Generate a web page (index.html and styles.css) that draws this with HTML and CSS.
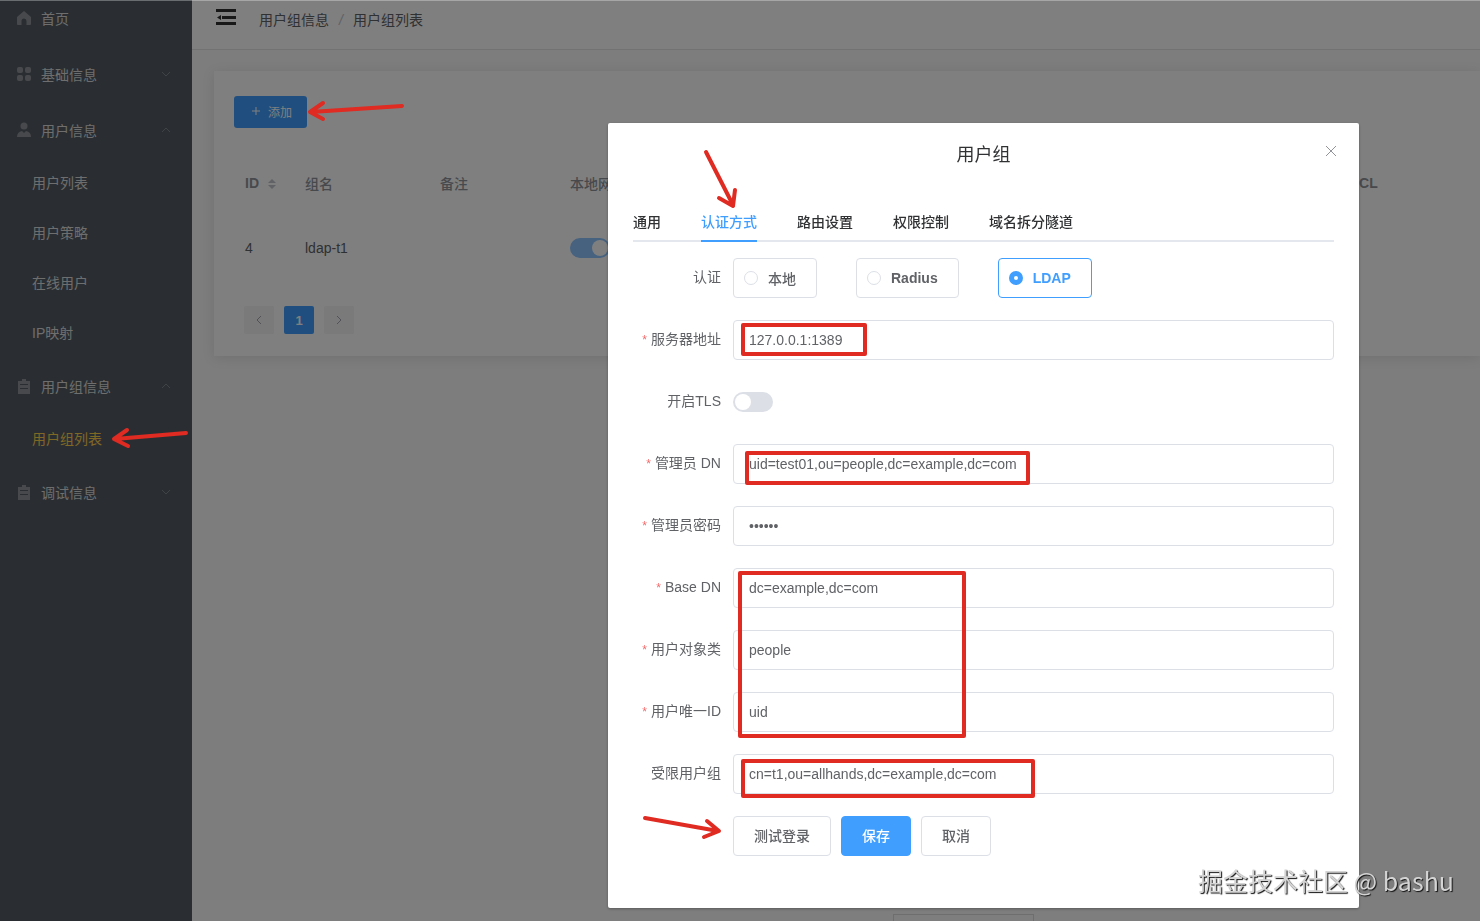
FILE: index.html
```html
<!DOCTYPE html>
<html lang="zh-CN">
<head>
    <meta charset="UTF-8">
    <meta name="viewport" content="width=device-width, initial-scale=1.0">
    <title>用户组列表</title>
    <link rel="stylesheet" href="styles.css">
</head>
<body>
    <div class="layout">
        <nav class="sidebar">
            <ul class="menu">
                <li><a class="menu-item" href="#">
                    <svg class="menu-icon" viewBox="0 0 18 18"><path d="M9 2 2 8v7q0 1 1 1h3.500v-4a2.500 2.500 0 0 1 5 0v4H15q1 0 1-1V8z"/></svg>
                    <span>首页</span></a></li>
                <li><a class="menu-item" href="#">
                    <svg class="menu-icon" viewBox="0 0 18 18"><rect x="2" y="2" width="6" height="6" rx="2"/><rect x="10" y="2" width="6" height="6" rx="2"/><rect x="2" y="10" width="6" height="6" rx="2"/><rect x="10" y="10" width="6" height="6" rx="2"/></svg>
                    <span>基础信息</span>
                    <svg class="chevron" viewBox="0 0 12 12"><path d="M2 4l4 4 4-4"/></svg></a></li>
                <li><a class="menu-item" href="#">
                    <svg class="menu-icon" viewBox="0 0 18 18"><circle cx="9" cy="5" r="3.500"/><path d="M2 16q0-5 5-6l2 2 2-2q5 1 5 6z"/></svg>
                    <span>用户信息</span>
                    <svg class="chevron" viewBox="0 0 12 12"><path d="M2 8l4-4 4 4"/></svg></a>
                    <ul class="submenu">
                        <li><a href="#">用户列表</a></li>
                        <li><a href="#">用户策略</a></li>
                        <li><a href="#">在线用户</a></li>
                        <li><a href="#">IP映射</a></li>
                    </ul></li>
                <li><a class="menu-item" href="#">
                    <svg class="menu-icon" viewBox="0 0 18 18"><path d="M3 4h4V2h4v2h4v13H3zM5 7v1h8V7zm0 4v1h8v-1z" fill-rule="evenodd"/></svg>
                    <span>用户组信息</span>
                    <svg class="chevron" viewBox="0 0 12 12"><path d="M2 8l4-4 4 4"/></svg></a>
                    <ul class="submenu">
                        <li><a class="active" href="#">用户组列表</a></li>
                    </ul></li>
                <li><a class="menu-item" href="#">
                    <svg class="menu-icon" viewBox="0 0 18 18"><path d="M3 4h4V2h4v2h4v13H3zM5 7v1h8V7zm0 4v1h8v-1z" fill-rule="evenodd"/></svg>
                    <span>调试信息</span>
                    <svg class="chevron" viewBox="0 0 12 12"><path d="M2 4l4 4 4-4"/></svg></a></li>
            </ul>
        </nav>

        <div class="page">
            <header class="topbar">
                <button class="collapse-btn" type="button" aria-label="折叠菜单">
                    <svg viewBox="0 0 20 16" width="20" height="16"><path d="M0 0h20v3H0zM6 7h14v3H6zM0 13h20v3H0zM1 8.500 5 6v5z"/></svg>
                </button>
                <div class="breadcrumb">
                    <span>用户组信息</span><i>/</i><span>用户组列表</span>
                </div>
            </header>

            <main class="content">
                <section class="card">
                    <button class="add-btn" type="button">
                        <svg viewBox="0 0 12 12" width="12" height="12"><path d="M6 2v8M2 6h8"/></svg>
                        添加
                    </button>
                    <table class="group-table">
                        <thead>
                            <tr>
                                <th class="col-id"><span class="latin">ID</span>
                                    <svg class="sort" viewBox="0 0 10 12" width="10" height="12"><path d="M5 1 9 5H1zM5 11 1 7h8z"/></svg></th>
                                <th class="col-name">组名</th>
                                <th class="col-note">备注</th>
                                <th>本地网络</th>
                                <th class="col-acl"><span class="latin">ACL</span></th>
                            </tr>
                        </thead>
                        <tbody>
                            <tr>
                                <td>4</td>
                                <td>ldap-t1</td>
                                <td></td>
                                <td><input class="switch" type="checkbox" aria-label="本地网络" checked disabled></td>
                                <td></td>
                            </tr>
                        </tbody>
                    </table>
                    <div class="pagination">
                        <button type="button" aria-label="上一页"><svg viewBox="0 0 12 12" width="12" height="12"><path d="M8 2 4 6l4 4"/></svg></button>
                        <button type="button" class="current">1</button>
                        <button type="button" aria-label="下一页"><svg viewBox="0 0 12 12" width="12" height="12"><path d="M4 2l4 4-4 4"/></svg></button>
                    </div>
                </section>
            </main>
            <footer class="footer"><div class="footer-box"></div></footer>
        </div>
    </div>

    <div class="overlay">
        <div class="dialog" role="dialog" aria-labelledby="dialog_title">
            <div class="dialog-header">
                <h2 id="dialog_title">用户组</h2>
                <button class="close-btn" type="button" aria-label="关闭">
                    <svg viewBox="0 0 16 16" width="16" height="16"><path d="M3 3l10 10M13 3 3 13"/></svg>
                </button>
            </div>
            <div class="dialog-body">
                <div class="tabs" role="tablist">
                    <button type="button" role="tab">通用</button>
                    <button type="button" role="tab" class="active" aria-selected="true">认证方式</button>
                    <button type="button" role="tab">路由设置</button>
                    <button type="button" role="tab">权限控制</button>
                    <button type="button" role="tab">域名拆分隧道</button>
                </div>
                <form class="form">
                    <div class="form-item">
                        <span class="label">认证</span>
                        <div class="radios">
                            <label class="radio"><input type="radio" name="auth">本地</label>
                            <label class="radio latin"><input type="radio" name="auth">Radius</label>
                            <label class="radio latin"><input type="radio" name="auth" checked>LDAP</label>
                        </div>
                    </div>
                    <div class="form-item required">
                        <label class="label" for="addr">服务器地址</label>
                        <input class="text" id="addr" type="text" value="127.0.0.1:1389">
                    </div>
                    <div class="form-item">
                        <label class="label" for="tls">开启TLS</label>
                        <input class="switch" id="tls" type="checkbox">
                    </div>
                    <div class="form-item required">
                        <label class="label" for="bind_dn">管理员 DN</label>
                        <input class="text" id="bind_dn" type="text" value="uid=test01,ou=people,dc=example,dc=com">
                    </div>
                    <div class="form-item required">
                        <label class="label" for="bind_pwd">管理员密码</label>
                        <input class="text" id="bind_pwd" type="password" value="123456">
                    </div>
                    <div class="form-item required">
                        <label class="label" for="base_dn">Base DN</label>
                        <input class="text" id="base_dn" type="text" value="dc=example,dc=com">
                    </div>
                    <div class="form-item required">
                        <label class="label" for="object_class">用户对象类</label>
                        <input class="text" id="object_class" type="text" value="people">
                    </div>
                    <div class="form-item required">
                        <label class="label" for="search_attr">用户唯一ID</label>
                        <input class="text" id="search_attr" type="text" value="uid">
                    </div>
                    <div class="form-item">
                        <label class="label" for="member_of">受限用户组</label>
                        <input class="text" id="member_of" type="text" value="cn=t1,ou=allhands,dc=example,dc=com">
                    </div>
                    <div class="form-item actions">
                        <button class="btn" type="button">测试登录</button>
                        <button class="btn primary" type="button">保存</button>
                        <button class="btn" type="button">取消</button>
                    </div>
                </form>
            </div>
        </div>
    </div>

    <!-- marcas rojas: flechas y recuadros -->
    <svg class="marks" width="1480" height="921" viewBox="0 0 1480 921">
        <path d="M402 106 311 112M323 103 310 112 323 119"/>
        <path d="M186 433 115 439M127 430 114 439 128 446"/>
        <path d="M706 152 733 205M719 198 733 206 735 190"/>
        <path d="M645 818 718 831M707 821 719 831 704 837"/>
        <rect x="743" y="325" width="122" height="29"/>
        <rect x="747" y="453" width="281" height="30"/>
        <rect x="740" y="573" width="224" height="163"/>
        <rect x="743" y="761" width="290" height="35"/>
    </svg>
    <div class="watermark">掘金技术社区 @ bashu</div>
</body>
</html>
```
FILE: styles.css
```css
* {
    box-sizing: border-box;
}

body {
    margin: 0;
    height: 100vh;
    overflow: hidden;
    font-family: "Liberation Sans", "Noto Sans CJK SC", sans-serif;
    font-size: 14px;
    color: #606266;
}

button, input {
    font-family: inherit;
    font-size: 14px;
    margin: 0;
}

button {
    cursor: pointer;
}

svg {
    flex: none;
}

.latin {
    font-weight: 700;
}

.layout {
    display: flex;
    height: 100vh;
}

/* menu lateral */
.sidebar {
    width: 192px;
    flex: none;
    background: #545c64;
    overflow: hidden;
}

.menu, .submenu {
    list-style: none;
    margin: 0;
    padding: 0;
}

.menu {
    margin-top: -10px;
}

.menu a {
    color: #dcdcdc;
    text-decoration: none;
}

.menu-item {
    display: flex;
    align-items: center;
    height: 56px;
    padding: 0 20px 0 15px;
}

.menu-icon {
    width: 18px;
    height: 18px;
    margin-right: 8px;
    fill: #909399;
}

.chevron {
    width: 12px;
    height: 12px;
    margin-left: auto;
    fill: none;
    stroke: #80868c;
}

.submenu a {
    display: block;
    height: 50px;
    line-height: 50px;
    padding-left: 32px;
}

.menu a.active {
    color: #ffd04b;
}

/* pagina */
.page {
    flex: 1;
    min-width: 0;
    display: flex;
    flex-direction: column;
    background: #fafafa;
}

.topbar {
    display: flex;
    align-items: flex-start;
    gap: 23px;
    height: 50px;
    padding: 9px 24px;
    background: #fff;
    border-bottom: 1px solid #e4e4e4;
}

.collapse-btn {
    padding: 0;
    border: 0;
    background: none;
    line-height: 0;
    fill: #303133;
}

.breadcrumb {
    line-height: 22px;
}

.breadcrumb i {
    margin: 0 10px;
    color: #c0c4cc;
}

.content {
    flex: 1;
    padding: 21px 0 0 22px;
}

.card {
    padding: 25px 0 22px 20px;
    background: #fff;
    box-shadow: 0 2px 12px rgba(0, 0, 0, 0.1);
}

.add-btn {
    display: flex;
    align-items: center;
    gap: 6px;
    height: 32px;
    padding: 0 15px 2px 16px;
    border: 0;
    border-radius: 3px;
    background: #409eff;
    color: #fff;
    font-size: 12px;
}

.add-btn svg, .pagination svg {
    fill: none;
    stroke: currentColor;
}

.group-table {
    width: 100%;
    margin-top: 32px;
    table-layout: fixed;
    border-collapse: collapse;
}

.group-table th {
    height: 48px;
    padding: 0 11px 2px;
    color: #909399;
    font-weight: 500;
    text-align: left;
}

.group-table td {
    height: 80px;
    padding: 0 11px;
}

.col-id {
    width: 60px;
}

.col-name {
    width: 135px;
}

.col-note {
    width: 130px;
}

.group-table .col-acl {
    width: 142px;
}

.sort {
    margin-left: 4px;
    fill: #c0c4cc;
    vertical-align: middle;
}

.pagination {
    display: flex;
    gap: 10px;
    padding: 18px 10px 0;
}

.pagination button {
    display: flex;
    align-items: center;
    justify-content: center;
    width: 30px;
    height: 28px;
    padding: 0;
    border: 0;
    border-radius: 2px;
    background: #f4f4f5;
    color: #a0a4ac;
    font-size: 13px;
}

.pagination .current {
    background: #409eff;
    color: #fff;
    font-weight: 700;
}

.footer {
    height: 21px;
    padding: 14px 0 0 701px;
    background: #fdfdfd;
}

.footer-box {
    width: 141px;
    height: 7px;
    border: 1px solid #dcdcdc;
    border-bottom: 0;
}

/* interruptor */
.switch {
    appearance: none;
    display: block;
    width: 40px;
    height: 20px;
    padding: 2px;
    border-radius: 10px;
    background: #dcdfe6;
}

.switch::before {
    content: "";
    display: block;
    width: 16px;
    height: 16px;
    border-radius: 50%;
    background: #fff;
}

.switch:checked {
    background: #409eff;
}

.switch:checked::before {
    margin-left: auto;
}

.switch:disabled {
    opacity: 0.6;
}

/* dialogo */
.overlay {
    position: fixed;
    inset: 0;
    display: flex;
    justify-content: flex-end;
    align-items: flex-start;
    padding: 122px 121px 0 0;
    border-top: 1px solid rgba(255, 255, 255, 0.3);
    background: rgba(0, 0, 0, 0.5);
}

.dialog {
    width: 100%;
    max-width: 751px;
    border-radius: 2px;
    background: #fff;
    box-shadow: 0 1px 3px rgba(0, 0, 0, 0.3);
}

.dialog-header {
    position: relative;
    padding: 20px 20px 10px;
    text-align: center;
}

.dialog-header h2 {
    margin: 0;
    color: #303133;
    font-size: 18px;
    font-weight: 400;
    line-height: 24px;
}

.close-btn {
    position: absolute;
    top: 20px;
    right: 20px;
    padding: 0;
    border: 0;
    background: none;
    line-height: 0;
    fill: none;
    stroke: #909399;
}

.dialog-body {
    padding: 25px 25px 30px;
}

.tabs {
    display: flex;
    gap: 40px;
    margin-bottom: 16px;
    box-shadow: inset 0 -2px #e4e7ed;
}

.tabs button {
    height: 40px;
    padding: 0;
    border: 0;
    border-bottom: 2px solid transparent;
    background: none;
    color: #303133;
    font-weight: 500;
}

.tabs .active {
    border-color: #409eff;
    color: #409eff;
}

.form-item {
    display: flex;
    align-items: center;
    height: 40px;
    margin-bottom: 22px;
}

.label {
    flex: none;
    width: 100px;
    padding: 0 12px 2px 0;
    line-height: 38px;
    text-align: right;
}

.required .label::before {
    content: "*";
    margin-right: 4px;
    color: #f56c6c;
    font-size: 12px;
}

.text {
    flex: 1;
    min-width: 0;
    height: 40px;
    padding: 0 15px 1px;
    border: 1px solid #dcdfe6;
    border-radius: 4px;
    background: #fff;
    color: #606266;
}

.radios {
    display: flex;
    gap: 39px;
}

.radio {
    display: flex;
    align-items: center;
    gap: 10px;
    height: 40px;
    padding: 0 20px 0 10px;
    border: 1px solid #dcdfe6;
    border-radius: 4px;
    font-weight: 500;
}

.radio.latin {
    font-weight: 700;
}

.radio input {
    appearance: none;
    width: 14px;
    height: 14px;
    border: 1px solid #dcdfe6;
    border-radius: 50%;
}

.radio input:checked {
    border: 5px solid #409eff;
}

.radio:has(input:checked) {
    border-color: #409eff;
    color: #409eff;
}

.actions {
    gap: 10px;
    padding-left: 100px;
}

.btn {
    height: 40px;
    padding: 0 20px 2px;
    border: 1px solid #dcdfe6;
    border-radius: 4px;
    background: #fff;
    color: #606266;
    font-weight: 500;
}

.btn.primary {
    border-color: #409eff;
    background: #409eff;
    color: #fff;
}

/* marcas */
.marks {
    position: fixed;
    top: 0;
    left: 0;
    fill: none;
    stroke: #df2b22;
    stroke-width: 4;
    stroke-linecap: round;
    stroke-linejoin: round;
    pointer-events: none;
}

.watermark {
    position: fixed;
    right: 26px;
    bottom: 23px;
    color: #d4d4d4;
    font-family: "Noto Sans CJK SC", sans-serif;
    font-size: 25px;
    line-height: 36px;
    text-shadow: 1px 1px 1px #111;
}
```
